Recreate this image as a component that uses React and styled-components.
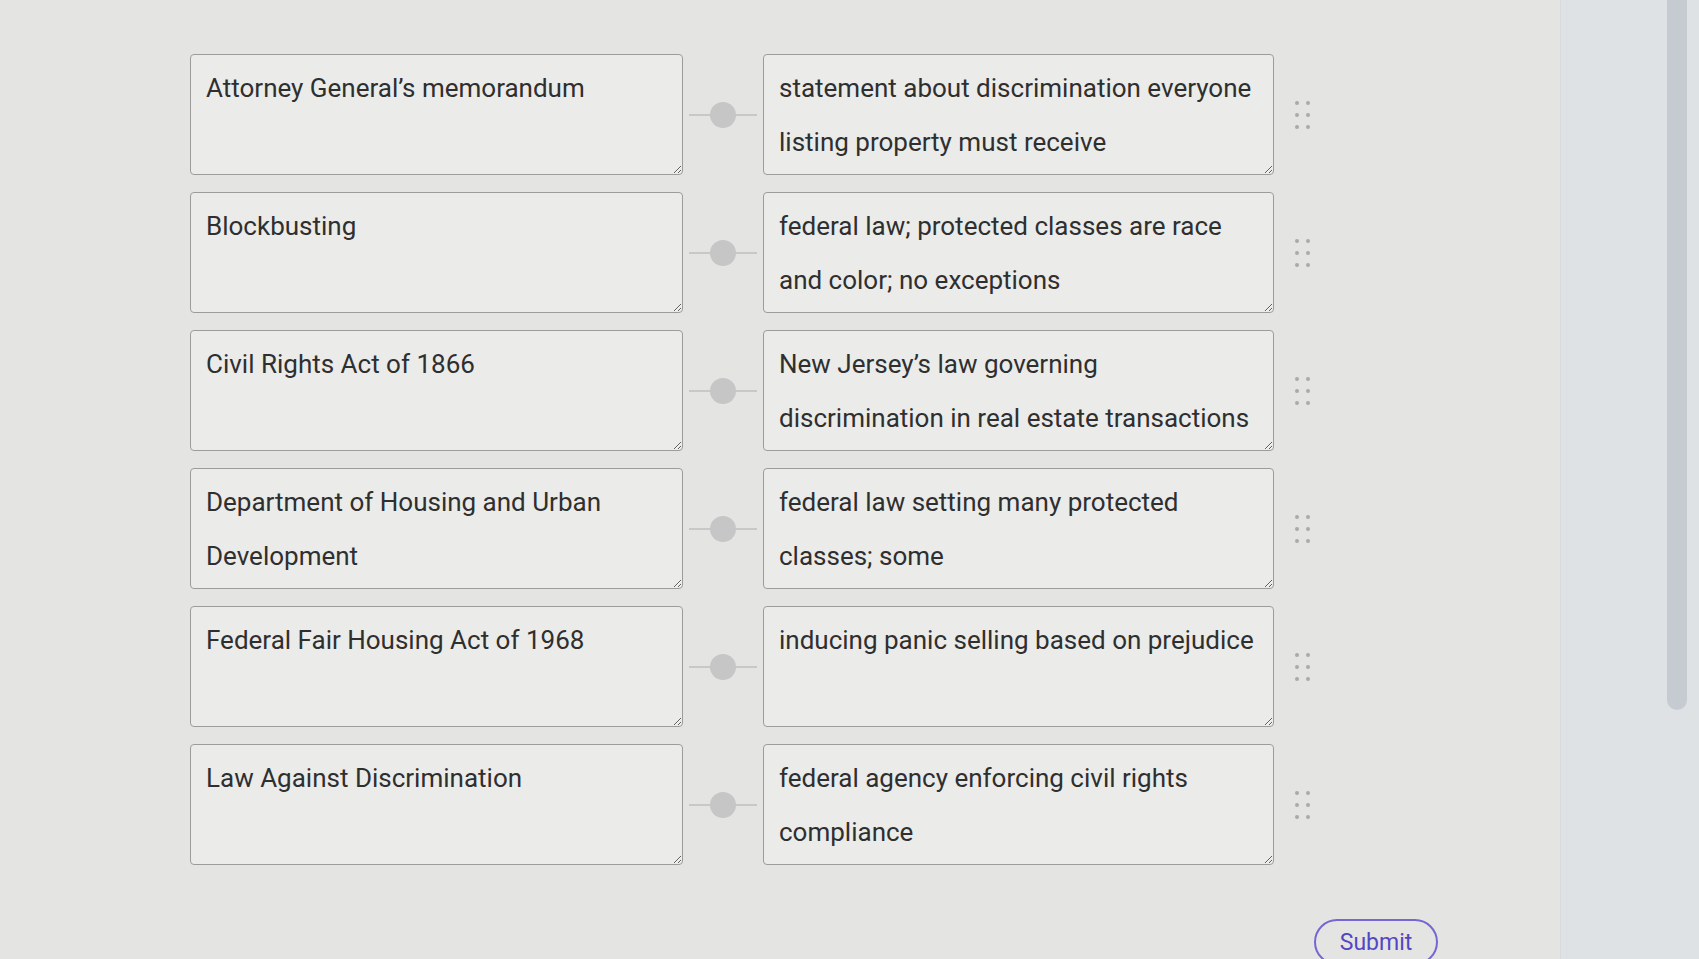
import React from 'react';
import styled, { createGlobalStyle } from 'styled-components';

const GlobalStyle = createGlobalStyle`
  html, body {
    margin: 0;
    padding: 0;
    background: #e4e4e2;
    font-family: Roboto, "Noto Sans", "Liberation Sans", sans-serif;
  }
`;

const Page = styled.div`
  display: flex;
  width: 1699px;
  height: 959px;
  overflow: hidden;
`;

const Main = styled.div`
  flex: 0 0 1560px;
  padding: 54px 0 0 190px;
  box-sizing: border-box;
  background: #e4e4e2;
`;

const Side = styled.div`
  flex: 1;
  display: flex;
  justify-content: flex-end;
  padding-right: 12px;
  background: #dfe2e4;
  border-left: 1px solid #d8dbdd;
`;

const ScrollThumb = styled.div`
  width: 20px;
  height: 710px;
  border-radius: 0 0 10px 10px;
  background: #c6cbd1;
`;

const List = styled.div`
  display: flex;
  flex-direction: column;
  gap: 17px;
`;

const Row = styled.div`
  display: grid;
  grid-template-columns: 493px 80px 511px 48px;
  align-items: center;
  height: 121px;
`;

const Card = styled.div`
  box-sizing: border-box;
  height: 121px;
  padding: 6px 14px 0 15px;
  border: 1.5px solid #9c9c9c;
  border-radius: 4px;
  background: #ebebea;
  color: #2f2f2f;
  font-size: 26px;
  line-height: 54px;
  resize: vertical;
  overflow: hidden;
`;

const Connector = styled.div`
  position: relative;
  height: 26px;
  display: flex;
  align-items: center;
  justify-content: center;

  &::before {
    content: '';
    position: absolute;
    left: 6px;
    right: 6px;
    top: 12px;
    height: 2px;
    background: #c8c8c8;
  }
`;

const Knob = styled.div`
  position: relative;
  width: 26px;
  height: 26px;
  border-radius: 50%;
  background: #c6c6c6;
`;

const Handle = styled.div`
  justify-self: center;
  display: grid;
  grid-template-columns: repeat(2, 4px);
  grid-auto-rows: 4px;
  column-gap: 7px;
  row-gap: 8px;
  margin-left: 8px;
`;

const Dot = styled.span`
  width: 4px;
  height: 4px;
  border-radius: 50%;
  background: #aaaaaa;
`;

const Footer = styled.div`
  display: flex;
  padding: 54px 0 0 1124px;
`;

const SubmitButton = styled.button`
  width: 124px;
  height: 46px;
  border: 2px solid #7467d4;
  border-radius: 23px;
  background: transparent;
  color: #5447c4;
  font-family: Roboto, "Noto Sans", sans-serif;
  font-size: 23px;
  cursor: pointer;
`;

const rows = [
  ['Attorney General’s memorandum', 'statement about discrimination everyone listing property must receive'],
  ['Blockbusting', 'federal law; protected classes are race and color; no exceptions'],
  ['Civil Rights Act of 1866', 'New Jersey’s law governing discrimination in real estate transactions'],
  ['Department of Housing and Urban Development', 'federal law setting many protected classes; some'],
  ['Federal Fair Housing Act of 1968', 'inducing panic selling based on prejudice'],
  ['Law Against Discrimination', 'federal agency enforcing civil rights compliance'],
];

export default function App() {
  return (
    <Page>
      <GlobalStyle />
      <Main>
        <List>
          {rows.map(([term, definition]) => (
            <Row key={term}>
              <Card>{term}</Card>
              <Connector>
                <Knob />
              </Connector>
              <Card>{definition}</Card>
              <Handle>
                {Array.from({ length: 6 }).map((_, i) => (
                  <Dot key={i} />
                ))}
              </Handle>
            </Row>
          ))}
        </List>
        <Footer>
          <SubmitButton type="button">Submit</SubmitButton>
        </Footer>
      </Main>
      <Side>
        <ScrollThumb />
      </Side>
    </Page>
  );
}
